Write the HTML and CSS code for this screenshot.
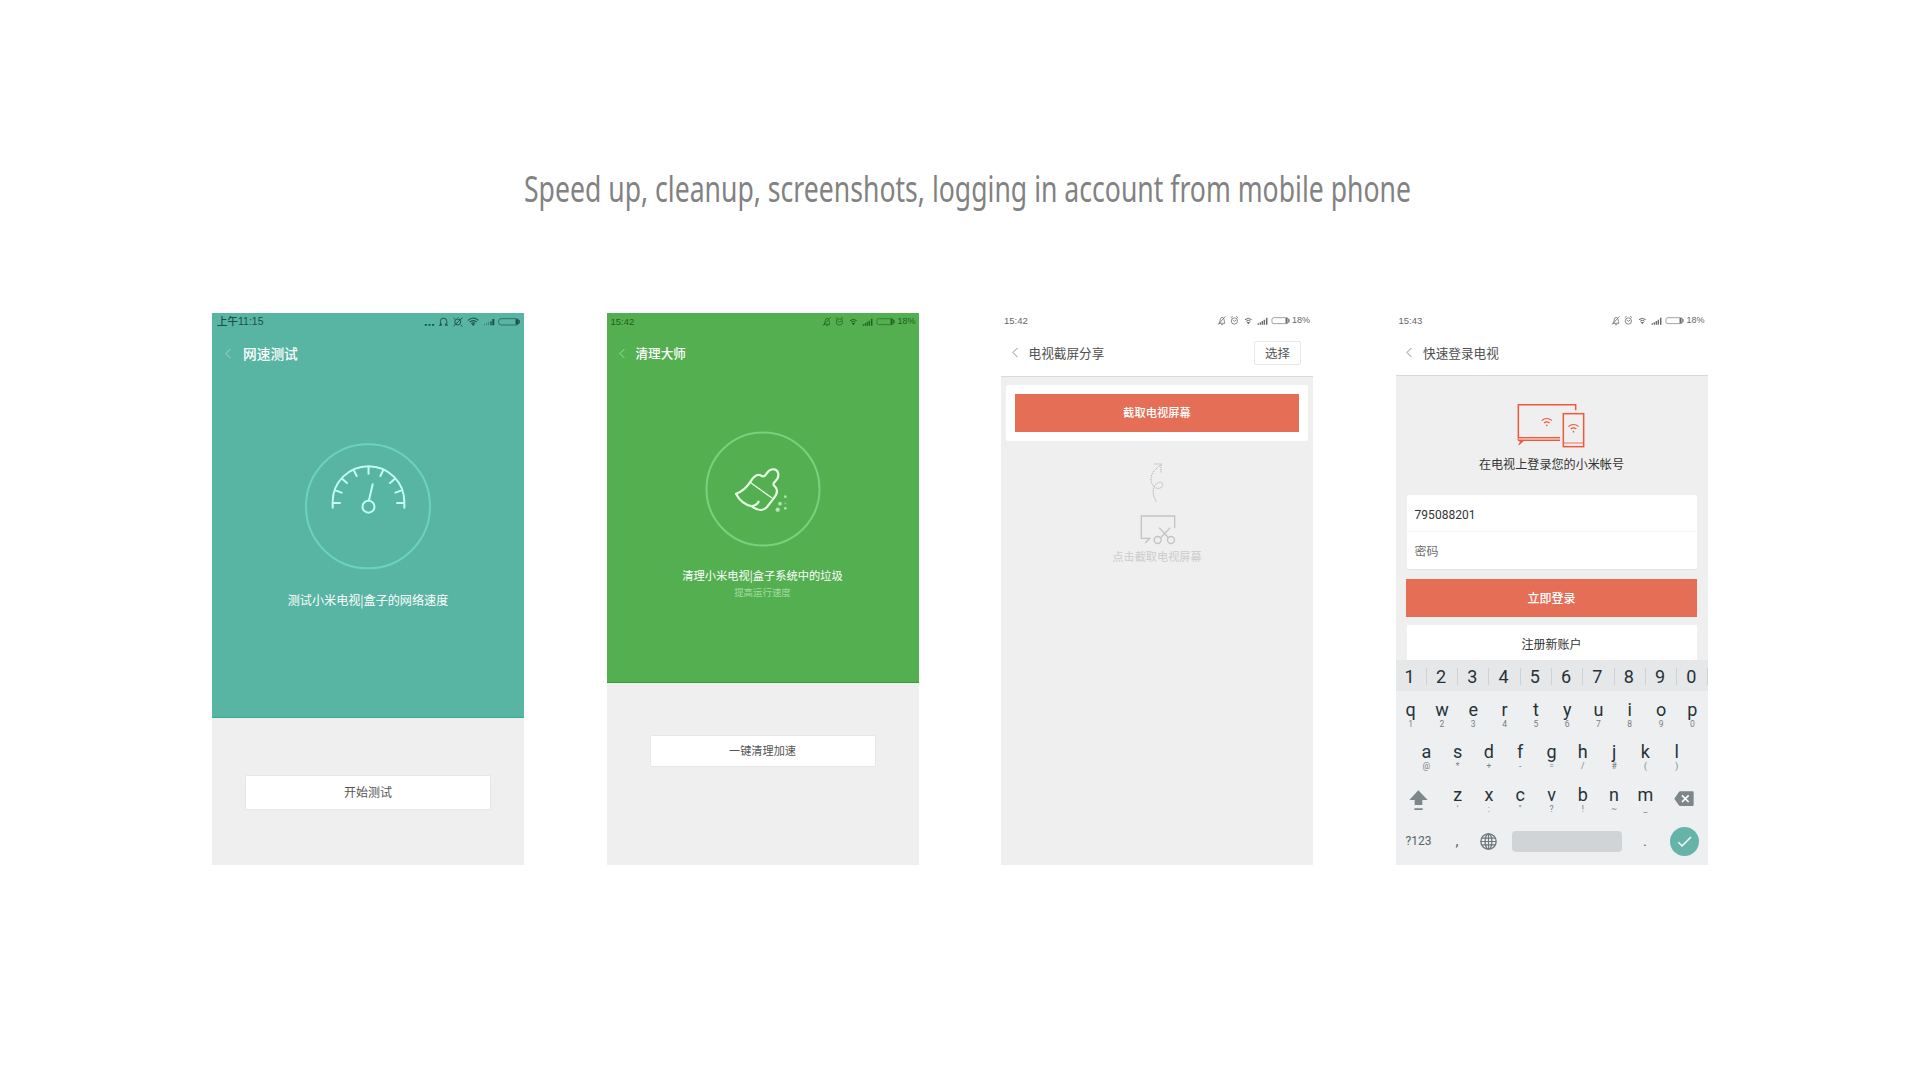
FILE: index.html
```html
<!DOCTYPE html>
<html lang="zh-CN">
<head>
<meta charset="utf-8">
<title>Mobile tools</title>
<link rel="stylesheet" href="styles.css">
</head>
<body>
<svg class="defs" width="0" height="0">
  <symbol id="back" viewBox="0 0 20 34"><path d="M18 2 3 17 18 32" fill="none" stroke="currentColor" stroke-width="2.6"/></symbol>
  <symbol id="status" viewBox="668 46 220 34">
    <g fill="none" stroke="currentColor" stroke-width="2.3">
      <path d="M672 71h20M675 70c3-4 1-17 8-17s6 12 8 17M680 75h6M671 75 693 50"/>
      <circle cx="720" cy="64" r="9.5"/><path d="M715 61l5 4 6-4M709 54l6-4M731 54l-6-4"/>
      <path d="M752 60q10-8 20 0" stroke-width="3"/><path d="M755.500 64.500q6.500-5 13 0" stroke-width="3"/>
      <rect x="833" y="54" width="50" height="18" rx="6" stroke-width="1.800"/>
    </g>
    <g fill="currentColor">
      <path d="M757 67h10l-5 7z"/>
      <path d="M790 71h4v4h-4zM796 68h4v7h-4zM802 64h4v11h-4zM808 60h4v15h-4zM815 54h4.500v21H815z"/>
      <rect x="874" y="55" width="6" height="16"/><rect x="883" y="58" width="3" height="10"/>
    </g>
  </symbol>
</svg>

<h1 class="headline">
  <svg width="900" height="90" viewBox="0 0 900 90"><text x="0" y="60" textLength="887" lengthAdjust="spacingAndGlyphs">Speed up, cleanup, screenshots, logging in account from mobile phone</text></svg>
</h1>

<main class="phones">
  <section class="phone speed">
    <div class="hero">
      <div class="statusbar">
        <span class="time">上午11:15</span>
        <svg class="icons-wide" viewBox="672 48 290 34">
          <g fill="none" stroke="currentColor" stroke-width="2.800">
            <path d="M717 76h7v-5M743 76h-7v-5M721 76V64a9.500 9.500 0 0 1 19 0v12"/>
            <circle cx="773" cy="66" r="9"/><path d="M760 79 787 53M765 57l-4-2M782 76l5 3M774 53v-2"/>
            <path d="M804 61q15-14 31 0M809 66.500q10.500-9 21 0M814 71q6-5 11 0" stroke-width="3.500"/>
            <rect x="896" y="56" width="61" height="19" rx="8" stroke-width="2"/>
          </g>
          <g fill="currentColor">
            <path d="M674 72h6v5h-6zM685 72h6v5h-6zM696 72h6v5h-6zM815 72h9l-4.500 6z"/>
            <path opacity=".45" d="M852 72h3v4h-3zM858 69h3v7h-3zM864 66h3v10h-3z"/><path d="M871 64h4v12h-4zM877 57h6v19h-6z"/>
            <rect x="947" y="58" width="8" height="15"/><rect x="957" y="61" width="3" height="9"/>
          </g>
        </svg>
      </div>
      <div class="titlebar"><svg class="back"><use href="#back"/></svg><span>网速测试</span></div>
      <svg class="gauge" viewBox="102 64 384 384">
        <circle cx="294" cy="257" r="186" fill="none" stroke="#6ad3c0" stroke-width="6"/>
        <g fill="none" stroke="#c2fff5" stroke-width="6" stroke-linecap="round">
          <path d="M188 261V244a107.500 107.500 0 0 1 215 0V261"/>
          <path d="M191 247h19M198 210l17 6M218 176l13 11M252 150l8 16M295.500 138v21M339 150l-8 16M373 176l-13 11M393 210l-17 6M401 247h-20M308 191 297 238"/>
          <circle cx="295.500" cy="258" r="18"/>
        </g>
      </svg>
      <p class="caption">测试小米电视|盒子的网络速度</p>
    </div>
    <button class="btn">开始测试</button>
  </section>

  <section class="phone clean">
    <div class="hero">
      <div class="statusbar"><span class="time">15:42</span><svg class="icons"><use href="#status"/></svg><span class="pct">18%</span></div>
      <div class="titlebar"><svg class="back"><use href="#back"/></svg><span>清理大师</span></div>
      <svg class="broom" viewBox="105 49 348 348">
        <circle cx="279" cy="223" r="169.500" fill="none" stroke="#79d17c" stroke-width="6"/>
        <g fill="none" stroke="#e4ffe4" stroke-width="6.500" stroke-linejoin="round">
          <path d="M242 200C252 184 261 177 272 182 281 189 286 183 292 174 301 160 320 161 324 174 328 185 322 194 315 201 308 207 309 211 316 217 325 226 322 237 311 251L291 277C278 291 260 286 246 275 225 270 208 257 198 237 218 231 229 220 242 200Z"/>
          <path d="M242 204 306 250" stroke-width="4"/><path d="M246 274C257 273 263 268 267 259"/>
        </g>
        <g fill="#b1e4b1"><circle cx="323" cy="285" r="6.500"/><circle cx="330" cy="267" r="5.500"/><circle cx="346" cy="246" r="4"/><circle cx="346" cy="281" r="4"/><circle cx="346" cy="266" r="3.500" opacity=".4"/></g>
      </svg>
      <p class="caption">清理小米电视|盒子系统中的垃圾</p>
      <p class="sub">提高运行速度</p>
    </div>
    <button class="btn">一键清理加速</button>
  </section>

  <section class="phone shot">
    <header class="top">
      <div class="statusbar"><span class="time">15:42</span><svg class="icons"><use href="#status"/></svg><span class="pct">18%</span></div>
      <div class="titlebar"><svg class="back"><use href="#back"/></svg><span>电视截屏分享</span><button class="select">选择</button></div>
    </header>
    <div class="card"><button class="primary">截取电视屏幕</button></div>
    <svg class="capture" viewBox="147 35 114 250" fill="none" stroke="#c2c3c3" stroke-width="4">
      <path stroke="#aaa" stroke-width="2.600" stroke-dasharray="4 2.500" d="M199 154C190 138 186 122 193 108 202 93 216 92 218 102 219 115 200 119 190 107 178 91 178 66 214 43M192 41h23M213 43v23"/>
      <path d="M254 234V197H154V264H179L166 278"/>
      <path d="M207 232 236 263M241 232 211 263"/><circle cx="203" cy="269" r="10.500"/><circle cx="243" cy="269" r="10.500"/>
    </svg>
    <p class="hint">点击截取电视屏幕</p>
  </section>

  <section class="phone login">
    <header class="top">
      <div class="statusbar"><span class="time">15:43</span><svg class="icons"><use href="#status"/></svg><span class="pct">18%</span></div>
      <div class="titlebar"><svg class="back"><use href="#back"/></svg><span>快速登录电视</span></div>
    </header>
    <svg class="devices" viewBox="398 309 204 135" fill="none" stroke="#ec5a3b" stroke-width="4.500">
      <path d="M574 331V314H402V421M402 413H527" /><path d="M402 417H527" stroke="#f3b4a5" stroke-width="4"/><path d="M401 421H527M416 422 403 434M405 425h8" stroke-width="4"/>
      <rect x="537" y="341" width="61" height="99"/><path d="M537 429h61" stroke-width="2.500"/>
      <path d="M472 362q15-13 31 0M479 369q8-7 17 0M552 380q15-13 31 0M559 387q8-7 17 0" stroke-width="3.500"/>
      <circle cx="487.500" cy="376" r="2.500" fill="#ec5a3b" stroke="none"/><circle cx="567.500" cy="395" r="2.500" fill="#ec5a3b" stroke="none"/>
    </svg>
    <p class="lead">在电视上登录您的小米帐号</p>
    <div class="fields"><div class="field account">795088201</div><div class="field password">密码</div></div>
    <button class="primary">立即登录</button>
    <button class="register">注册新账户</button>
    <div class="keyboard">
      <div class="digits"><span>1</span><span>2</span><span>3</span><span>4</span><span>5</span><span>6</span><span>7</span><span>8</span><span>9</span><span>0</span></div>
      <div class="keys">
        <div class="key">q<i>1</i></div><div class="key">w<i>2</i></div><div class="key">e<i>3</i></div><div class="key">r<i>4</i></div><div class="key">t<i>5</i></div><div class="key">y<i>6</i></div><div class="key">u<i>7</i></div><div class="key">i<i>8</i></div><div class="key">o<i>9</i></div><div class="key">p<i>0</i></div>
      </div>
      <div class="keys">
        <div class="key">a<i>@</i></div><div class="key">s<i>*</i></div><div class="key">d<i>+</i></div><div class="key">f<i>-</i></div><div class="key">g<i>=</i></div><div class="key">h<i>/</i></div><div class="key">j<i>#</i></div><div class="key">k<i>(</i></div><div class="key">l<i>)</i></div>
      </div>
      <div class="keys">
        <div class="wide"><svg class="shift" viewBox="72 407 57 62" fill="#7d878b"><path d="M100 408 128 437H112V452H89V437H73zM88 462h25v5H88z"/></svg></div>
        <div class="key">z<i>'</i></div><div class="key">x<i>:</i></div><div class="key">c<i>"</i></div><div class="key">v<i>?</i></div><div class="key">b<i>!</i></div><div class="key">n<i>~</i></div><div class="key">m<i>_</i></div>
        <div class="wide end"><svg class="erase" viewBox="869 407 60 46"><path d="M888 408H925Q928 408 928 411V449Q928 452 925 452H888Q885 452 883 449L870 430 883 411Q885 408 888 408Z" fill="#7d878b"/><path d="M893 420 913 440M913 420 893 440" stroke="#fff" stroke-width="5"/></svg></div>
      </div>
      <div class="bottom">
        <span class="mode">?123</span><span class="comma">,</span>
        <svg class="globe" viewBox="0 0 50 50" fill="none" stroke="#6f797d" stroke-width="4"><circle cx="25" cy="25" r="22.500"/><ellipse cx="25" cy="25" rx="10" ry="22.500"/><path d="M25 2v46M3 25h44M6 15h38M6 35h38" stroke-width="3.500"/></svg>
        <span class="space"></span><span class="dot">.</span>
        <svg class="enter" viewBox="0 0 87 87"><circle cx="43.500" cy="43.500" r="43.500" fill="#66b3aa"/><path d="M25 46 36 57 63 30" fill="none" stroke="#fff" stroke-width="4.500"/></svg>
      </div>
    </div>
  </section>
</main>
</body>
</html>
```
FILE: styles.css
```css
* { box-sizing: border-box; }
body { margin: 0; width: 1920px; height: 1080px; overflow: hidden; background: #fff; font-family: "Noto Sans CJK SC", sans-serif; }
p, h1 { margin: 0; font-weight: 400; }
svg { display: block; flex: none; }
button { display: block; border: 0; padding: 0; font-family: inherit; text-align: center; background: #fff; color: #555; }
.defs { position: absolute; }

.headline { height: 313px; padding: 142px 0 0 523.5px; line-height: 0; }
.headline svg { overflow: visible; }
.headline text { font: 400 36px "Noto Sans", sans-serif; fill: #828282; }

.phones { display: flex; gap: 82.5px; padding-left: 212px; }
.phone { width: 312px; height: 552px; flex: none; background: #efefef; overflow: hidden; display: flex; flex-direction: column; align-items: center; }
.phone > *, .hero > * { flex: none; }
.hero { width: 100%; display: flex; flex-direction: column; align-items: center; color: #fff; }

.statusbar { width: 100%; height: 17px; display: flex; align-items: center; padding: 0 4px; font: 9.500px/17px "Liberation Sans", "Noto Sans CJK SC", sans-serif; }
.icons { width: 73.3px; height: 11.3px; margin-left: auto; }
.pct { width: 17px; margin-left: 2px; font-size: 9px; white-space: nowrap; }
.titlebar { width: 100%; height: 46px; display: flex; align-items: center; padding-left: 12px; font-size: 12.600px; line-height: 46px; font-weight: 500; }
.back { width: 6px; height: 11px; margin-right: 11px; opacity: .6; }

.speed .hero { height: 405px; background: #58b4a3; border-bottom: 1px solid #35ab96; }
.speed .statusbar { color: #1d4f46; height: 17px; padding: 0 3px 0 5px; font-size: 10.500px; font-weight: 500; }
.icons-wide { width: 96.7px; height: 11.3px; margin-left: auto; }
.speed .titlebar { font-size: 13.700px; padding-left: 13px; }
.speed .back { margin-right: 12px; }
.gauge { width: 128px; height: 128px; margin-top: 66px; }
.speed .caption { font-size: 12.100px; line-height: 18px; margin-top: 21px; }
.speed .btn { width: 246px; height: 35px; margin-top: 57px; padding-bottom: 2px; font-size: 12px; }
.btn { border: 1px solid #e7e7e7; border-radius: 2px; }

.clean .hero { height: 370px; background: #54af51; border-bottom: 1px solid #369e35; }
.clean .statusbar { color: #20611f; }
.clean .back { margin-right: 11px; }
.gauge, .broom { overflow: visible; }
.broom { width: 116px; height: 116px; margin-top: 55px; }
.clean .caption { font-size: 11.250px; line-height: 18px; margin-top: 19px; }
.clean .sub { font-size: 9.450px; line-height: 14px; margin-top: 1px; color: #a3dca3; }
.clean .btn { width: 226px; height: 32px; margin-top: 52px; padding-bottom: 2px; font-size: 11.150px; }

.top { width: 100%; height: 63px; background: #fff; border-bottom: 1px solid #d9d9d9; }
.top .statusbar { height: 15px; line-height: 15px; padding-left: 3px; color: #666; }
.top .titlebar { height: 49px; line-height: 50px; color: #505050; font-weight: 400; padding-right: 12px; font-size: 12.650px; }
.top .back { margin-left: -1.500px; margin-right: 11px; opacity: .8; }
.select { width: 47px; height: 24px; margin-left: auto; border: 1px solid #e6e6e6; border-radius: 2px; font-size: 12.500px; line-height: 22px; }
.primary { background: #e46e56; color: #fff; height: 38px; padding-bottom: 2px; font-weight: 500; }
.shot .top { height: 64px; }
.card { width: 302px; height: 56px; margin-top: 7.500px; padding: 9px; background: #fff; border-radius: 2px; }
.card .primary { width: 284px; font-size: 11.300px; }
.capture { width: 38px; height: 83.3px; margin: 21.500px 0 0 1px; }
.hint { font-size: 11.150px; line-height: 16px; color: #ccc; margin-top: 3px; }

.devices { width: 68px; height: 45px; margin: 27px 0 0 -1px; }
.lead { font-size: 12.100px; line-height: 18px; color: #333; margin-top: 7px; }
.fields { width: 290px; height: 75px; margin-top: 22px; background: #fff; border-radius: 2px; border-bottom: 1px solid #e3e3e3; }
.field { height: 37px; padding-left: 8px; line-height: 38px; font-size: 12px; color: #707070; }
.account { font-family: Roboto, sans-serif; line-height: 40px; color: #333; letter-spacing: .05px; border-bottom: 1px solid #f6f6f6; }
.login .primary { width: 291px; margin-top: 9px; font-size: 12px; }
.login .register { width: 290px; height: 35px; margin-top: 8px; padding-top: 2px; font-size: 12px; color: #333; }

.keyboard { width: 312px; height: 205px; background: #edeff1; font-family: Roboto, sans-serif; color: #263238; }
.digits { height: 31px; display: flex; align-items: center; background: #e5e7e9; font-size: 18px; line-height: 18px; padding-top: 1px; }
.digits span { width: 31.300px; height: 17px; flex: none; padding-right: 2px; text-align: center; border-right: 1px solid #cfd2d4; }
.keys { height: 42.400px; display: flex; justify-content: center; }
.key { width: 31.300px; height: 42px; flex: none; padding-top: 9px; display: flex; flex-direction: column; align-items: center; font-size: 18px; line-height: 20px; }
.key i { font-style: normal; font-size: 8.500px; line-height: 8px; color: #777f83; }
.wide { width: 46.400px; flex: none; padding: 14px 0 0 13px; }
.wide.end { padding: 15px 0 0 13px; }
.shift { width: 19px; height: 20.700px; }
.erase { width: 20px; height: 15.300px; }
.bottom { height: 46px; display: flex; align-items: center; padding-left: 10px; font-size: 12px; color: #59656a; }
.mode { width: 50px; }
.comma { width: 24.500px; font-size: 15px; }
.globe { width: 17px; height: 17px; }
.space { width: 110px; height: 21px; margin-left: 15px; border-radius: 4px; background: #d0d4d7; }
.dot { margin-left: 21px; width: 27px; font-size: 15px; }
.enter { width: 29px; height: 29px; }
```
